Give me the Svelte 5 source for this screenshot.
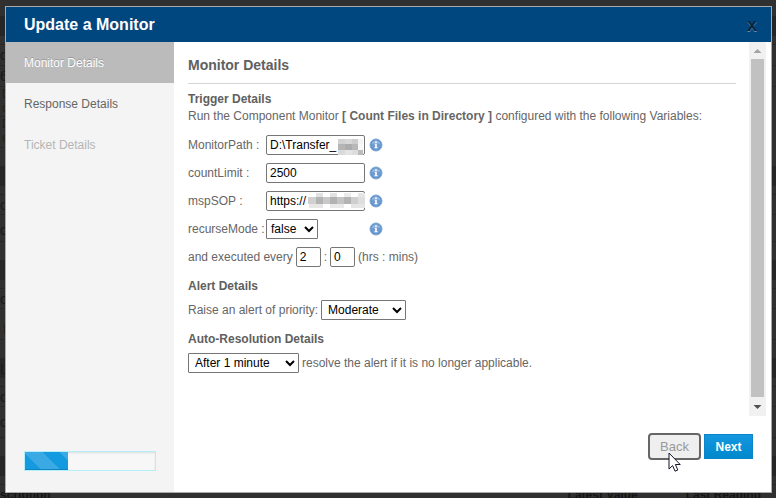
<script>
  const rows = [
    { h: 17, t: '' }, { h: 19, t: '', k: 'band' }, { h: 9, t: '' },
    { h: 21, t: 'c' }, { h: 21, t: '6' }, { h: 30, t: 'D c', k: 'amber' },
    { h: 31, t: 'D e', k: 'amber' }, { h: 19, t: '' }, { h: 19, t: '', k: 'band' },
    { h: 9, t: '' }, { h: 20, t: 'o' }, { h: 27, t: 'o', k: 'low' },
    { h: 19, t: '' }, { h: 19, t: '', k: 'band' }, { h: 9, t: '' },
    { h: 20, t: 'o' }, { h: 31, t: 'f', k: 'right' }, { h: 19, t: '' },
    { h: 19, t: 'L', k: 'band' }, { h: 9, t: '' }, { h: 20, t: 'o' },
    { h: 31, t: 'o', k: 'low' }, { h: 19, t: '' }, { h: 19, t: '', k: 'band' },
    { h: 9, t: '' }
  ];

  let path = $state('D:\\Transfer_');
  let limit = $state('2500');
  let sop = $state('https://');
  let recurse = $state('false');
  let hours = $state('2');
  let minutes = $state('0');
  let priority = $state('Moderate');
  let resolution = $state('After 1 minute');

  const pathMask = [
    [0, 0, 7, 5, '#d2d2d2'], [7, 0, 7, 5, '#d8d8d8'], [14, 0, 6, 5, '#cdcdcd'], [20, 0, 5, 5, '#f4f4f4'],
    [0, 5, 7, 6, '#b5b5b5'], [7, 5, 7, 6, '#acacac'], [14, 5, 6, 6, '#b8b8b8'], [20, 5, 5, 6, '#f8f8f8'],
    [0, 11, 7, 5, '#dadada'], [7, 11, 7, 5, '#e4e4e4'], [14, 11, 6, 5, '#dddddd'], [20, 11, 5, 5, '#bcbcbc']
  ];
  const sopMask = [
    [0, 4, 8, 7, '#d0d0d0'], [8, 4, 7, 7, '#b4b4b4'], [15, 4, 7, 7, '#c9c9c9'],
    [22, 4, 7, 7, '#b2b2b2'], [29, 4, 7, 7, '#c4c4c4'], [36, 4, 7, 7, '#b3b3b3'], [43, 4, 7, 7, '#cfcfcf'],
    [8, 0, 7, 4, '#e2e2e2'], [22, 0, 7, 4, '#e2e2e2'], [36, 0, 7, 4, '#ebebeb'], [50, 0, 7, 4, '#e6e6e6'],
    [50, 4, 7, 7, '#dedede'], [1, 11, 14, 4, '#e7e7e7'], [22, 11, 14, 4, '#e9e9e9'], [43, 11, 14, 4, '#e5e5e5']
  ];
</script>

{#snippet info()}
  <svg class="info" width="14" height="14" viewBox="0 0 14 14" role="img" aria-label="Information">
    <circle cx="7" cy="7" r="6" fill="#5488c6" stroke="#7fa8d8" />
    <circle cx="7" cy="7" r="5" fill="#6d9cd3" />
    <path d="M2.6 6A4.5 4.5 0 0 1 11.4 6Q7 4.4 2.6 6Z" fill="#91b6e0" />
    <path d="M6.2 3.4h1.6v1.5H6.2zM5.5 5.7h2.3v3.5h.8v1H5.4v-1h.8V6.6h-.7z" fill="#fff" />
  </svg>
{/snippet}

<div class="page">
  <div class="backdrop" aria-hidden="true">
    {#each rows as row}
      <div class="row {row.k ?? ''}" style="height: {row.h}px">{row.t}</div>
    {/each}
    <div class="columns"><span>scription</span><span class="push">Latest Value</span><span>Last Reading</span></div>
  </div>

  <section class="dialog" aria-labelledby="dialog-title">
    <header>
      <h1 id="dialog-title">Update a Monitor</h1>
      <button class="close" aria-label="Close">x</button>
    </header>
    <div class="body">
      <aside>
        <nav>
          <a class="active" href="#monitor">Monitor Details</a>
          <a href="#response">Response Details</a>
          <a class="disabled" href="#ticket">Ticket Details</a>
        </nav>
        <div class="progress" role="progressbar" aria-label="Progress" aria-valuenow="33">
          <div class="fill" style="width: 33%"></div>
        </div>
      </aside>
      <main>
        <div class="scroller">
          <form id="monitor">
            <h2>Monitor Details</h2>
            <h3>Trigger Details</h3>
            <p>Run the Component Monitor <b>[ Count Files in Directory ]</b> configured with the following Variables:</p>
            <div class="fields">
              <div class="field">
                <label for="path">MonitorPath :</label>
                <span class="control">
                  <input id="path" type="text" bind:value={path} />
                  <svg class="mask path-mask" width="25" height="16" shape-rendering="crispEdges" aria-hidden="true">
                    {#each pathMask as [x, y, w, h, c]}<rect {x} {y} width={w} height={h} fill={c} />{/each}
                  </svg>
                </span>
                {@render info()}
              </div>
              <div class="field">
                <label for="limit">countLimit :</label>
                <span class="control"><input id="limit" type="text" bind:value={limit} /></span>
                {@render info()}
              </div>
              <div class="field">
                <label for="sop">mspSOP :</label>
                <span class="control">
                  <input id="sop" type="text" bind:value={sop} />
                  <svg class="mask sop-mask" width="57" height="15" shape-rendering="crispEdges" aria-hidden="true">
                    {#each sopMask as [x, y, w, h, c]}<rect {x} {y} width={w} height={h} fill={c} />{/each}
                  </svg>
                </span>
                {@render info()}
              </div>
              <div class="field">
                <label for="recurse">recurseMode :</label>
                <span class="control">
                  <select id="recurse" class="short" bind:value={recurse}><option>false</option><option>true</option></select>
                </span>
                {@render info()}
              </div>
              <div class="line">
                <label for="hours">and executed every</label>
                <input id="hours" class="tiny" type="text" bind:value={hours} />
                <span>:</span>
                <input class="tiny" type="text" aria-label="Minutes" bind:value={minutes} />
                <span>(hrs : mins)</span>
              </div>
            </div>
            <h3>Alert Details</h3>
            <div class="line single">
              <label for="priority">Raise an alert of priority:</label>
              <select id="priority" class="medium" bind:value={priority}>
                <option>Low</option><option>Moderate</option><option>High</option><option>Critical</option>
              </select>
            </div>
            <h3>Auto-Resolution Details</h3>
            <div class="line single">
              <select id="resolution" class="long" bind:value={resolution}>
                <option>After 1 minute</option><option>After 5 minutes</option>
              </select>
              <label for="resolution">resolve the alert if it is no longer applicable.</label>
            </div>
          </form>
          <div class="scrollbar" aria-hidden="true">
            <svg width="17" height="17"><path d="M4.5 11h8L8.5 7z" fill="#a3a3a3" /></svg>
            <div class="thumb"></div>
            <svg width="17" height="19"><path d="M4.5 8h8L8.5 12z" fill="#505050" /></svg>
          </div>
        </div>
        <footer>
          <button class="back">Back</button>
          <button class="next">Next</button>
          <svg class="cursor" width="13" height="21" viewBox="0 0 13 21" aria-hidden="true">
            <path d="M1 1V17L4.6 13.6L7 19.2L9.8 18L7.4 12.5H12.2Z" fill="#fff" stroke="#15152a" />
          </svg>
        </footer>
      </main>
    </div>
  </section>
</div>

<style>
  :global(body) { margin: 0; background: #303030; }
  .page {
    position: relative;
    box-sizing: border-box;
    display: flex;
    min-height: 100vh;
    padding: 6px 4px 5px 5px;
    overflow: hidden;
    background: #303030;
    font: 12px/16px "Liberation Sans", Arial, sans-serif;
    color: #666;
  }
  .backdrop { position: absolute; inset: 0; overflow: hidden; color: #1a1a1a; font-size: 14px; line-height: 20px; }
  .row { box-sizing: border-box; border-bottom: 1px solid #272727; white-space: nowrap; }
  .band { background: #262626; border: 0; }
  .amber { padding-left: 2px; color: #241c16; font-size: 12px; line-height: 14px; width: 15px; white-space: normal; }
  .low { line-height: 30px; }
  .right { text-indent: 3px; line-height: 40px; color: #241c16; }
  .columns { position: absolute; top: 487px; left: 0; right: 15px; display: flex; gap: 48px; font-weight: bold; font-size: 12px; line-height: 16px; color: #151515; }
  .push { margin-left: auto; }

  .dialog { position: relative; box-sizing: border-box; flex: 1; display: flex; flex-direction: column; border: 1px solid #aaa; background: #fff; }
  header { display: flex; align-items: center; justify-content: space-between; height: 35px; padding: 0 14px 0 18px; background: #00467f; }
  h1 { margin: 0; font-size: 16px; line-height: 20px; color: #fff; }
  button { font-family: inherit; }
  .close { padding: 0; border: 0; background: none; width: 10px; font: bold 18px/20px "Liberation Sans", Arial, sans-serif; color: #062643; text-shadow: 0 1px 0 #6489aa; }
  .body { flex: 1; display: flex; }
  aside { width: 168px; display: flex; flex-direction: column; justify-content: space-between; background: #f4f4f4; border-bottom-left-radius: 6px; }
  nav { display: flex; flex-direction: column; }
  nav a { padding: 1px 18px 0; line-height: 40px; color: #666; text-decoration: none; }
  nav .active { background: #bbb; color: #fff; text-shadow: 0 -1px 0 #999; }
  nav .disabled { color: #b5b5b5; }
  .progress { box-sizing: border-box; height: 20px; margin: 0 18px 21px; border: 1px solid #b4effa; background: #f7f7f7; box-shadow: inset 0 1px 2px #ddd; }
  .fill {
    height: 100%;
    background: repeating-linear-gradient(45deg, #149bdf 0 12px, #3ba9e3 12px 25px);
    box-shadow: inset 0 -1px 0 #0d84c2;
  }
  main { flex: 1; display: flex; flex-direction: column; }
  .scroller { flex: 1; display: flex; margin-right: 5px; }
  form { flex: 1; padding: 12px 13px 0 14px; }
  h2 { margin: 0 0 7px; padding-bottom: 7px; border-bottom: 1px solid #d5d5d5; font-size: 14px; line-height: 22px; color: #606060; }
  h3 { margin: 0; font-size: 12px; line-height: 17px; color: #606060; }
  p { margin: 0; line-height: 17px; }
  .fields { display: flex; flex-direction: column; gap: 8px; margin: 10px 0 11px; }
  .field { display: flex; align-items: center; height: 20px; }
  .field label { width: 78px; }
  .control { position: relative; display: flex; width: 103px; }
  input { box-sizing: border-box; width: 99px; height: 20px; padding: 1px 3px; border: 1px solid #767676; border-radius: 2px; background: #fff; color: #000; font: 12px/16px "Liberation Sans", Arial, sans-serif; }
  input.tiny { width: 25px; }
  select { box-sizing: border-box; height: 20px; border: 1px solid #767676; border-radius: 1px; background: #fff; color: #000; font: 12px/16px "Liberation Sans", Arial, sans-serif; }
  .short { width: 52px; }
  .medium { width: 85px; padding-left: 2px; }
  .long { width: 111px; padding-left: 2px; }
  .mask { position: absolute; }
  .path-mask { left: 72px; top: 4px; }
  .sop-mask { left: 42px; top: 2px; }
  .line { display: flex; align-items: center; gap: 3px; height: 20px; }
  .single { margin: 5px 0 11px; }
  .scrollbar { display: flex; flex-direction: column; width: 17px; background: #f1f1f1; }
  .scrollbar svg { display: block; }
  .thumb { flex: 1; margin: 0 2px; background: #c1c1c1; }
  footer { position: relative; display: flex; align-items: center; justify-content: flex-end; gap: 3px; height: 27px; padding: 17px 18px 32px; }
  .back { box-sizing: border-box; width: 53px; height: 27px; padding: 0; border: 2px solid #666; border-radius: 4px; background: #efefef; color: #999; font-size: 13px; }
  .next { box-sizing: border-box; width: 49px; height: 25px; padding: 0; border: 1px solid #0b84c8; background: linear-gradient(#1497e0, #0088cc); color: #fff; font-size: 12px; font-weight: bold; }
  .cursor { position: absolute; right: 90px; top: 36px; }
</style>
